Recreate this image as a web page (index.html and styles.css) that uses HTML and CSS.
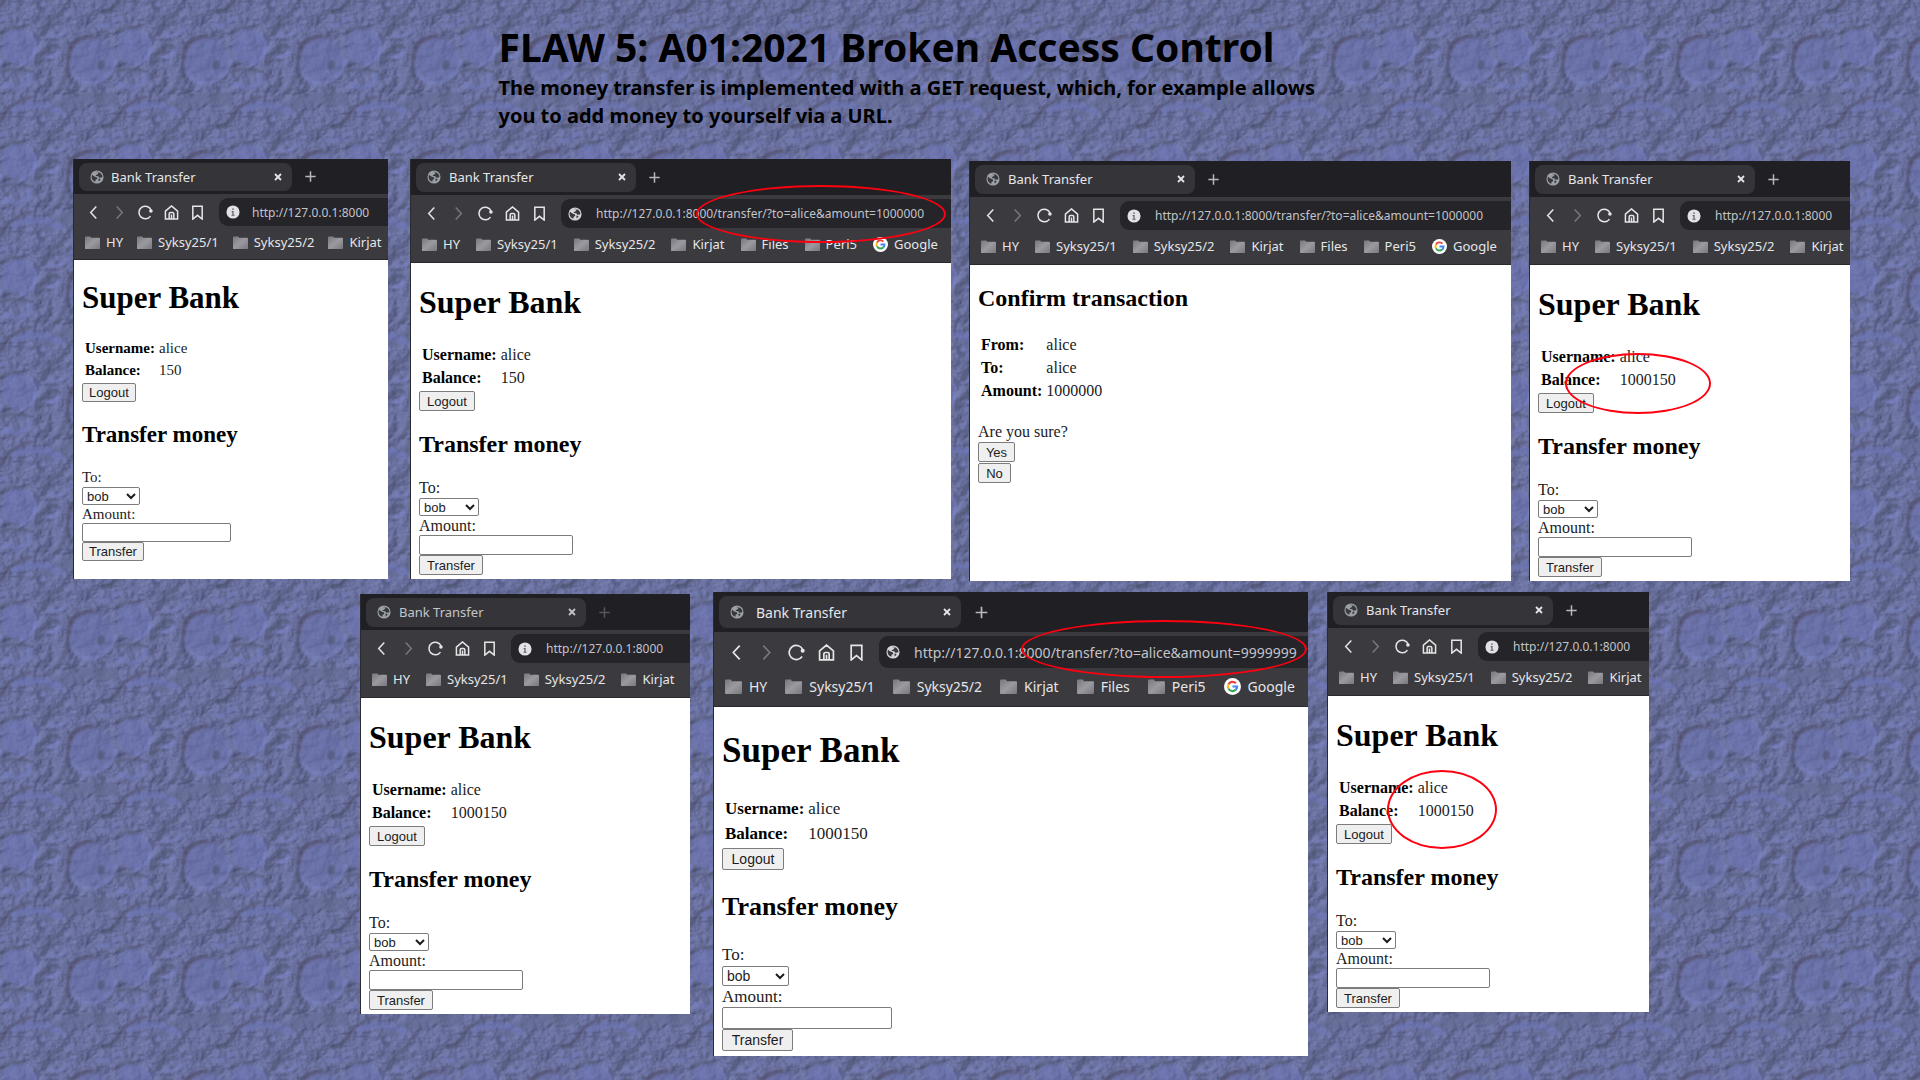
FILE: index.html
```html
<!DOCTYPE html>
<html lang="en">
<head>
<meta charset="utf-8">
<title>FLAW 5: A01:2021 Broken Access Control</title>
<link rel="stylesheet" href="styles.css">
</head>
<body>
<svg class="rock" aria-hidden="true">
  <defs>
    <filter id="soft" x="-20%" y="-20%" width="140%" height="140%" color-interpolation-filters="sRGB"><feGaussianBlur stdDeviation="1.3"/></filter>
    <filter id="grain" x="0" y="0" width="100%" height="100%" color-interpolation-filters="sRGB">
      <feTurbulence type="fractalNoise" baseFrequency="0.07 0.09" numOctaves="4" seed="8" stitchTiles="stitch"/>
      <feColorMatrix values="0 0 0 0 0  0 0 0 0 0  0 0 0 0 0  1 0 0 0 0"/>
      <feDiffuseLighting surfaceScale="4" diffuseConstant="1" lighting-color="#9198d0"><feDistantLight azimuth="25" elevation="48"/></feDiffuseLighting>
    </filter>
    <g id="crater-marks">
      <path d="M50 112Q85 92 112 100" stroke="#626a90" stroke-width="12"/>
      <ellipse cx="92" cy="59" rx="22" ry="21" fill="#6a71ae" stroke="none"/>
      <path d="M69 60Q66 40 92 36" stroke="#4b455e" stroke-width="4"/>
      <path d="M70 68Q77 86 98 82Q112 76 116 60" stroke="#7b84c8" stroke-width="4"/>
      <ellipse cx="101" cy="65" rx="4" ry="5" fill="#474d6c" stroke="none"/>
      <ellipse cx="18" cy="46" rx="16" ry="18" fill="#6c74b6" stroke="none"/>
      <path d="M34 38Q40 56 22 65" stroke="#8088d8" stroke-width="3"/>
      <path d="M2 32Q8 26 20 28" stroke="#525972" stroke-width="3"/>
      <path d="M43 33Q46 20 62 15" stroke="#4a516c" stroke-width="4"/>
      <path d="M50 35Q66 38 71 25" stroke="#7a82c8" stroke-width="3"/>
      <path d="M102 12Q110 12 118 2" stroke="#444960" stroke-width="4"/>
      <path d="M100 24Q108 29 118 18" stroke="#757dc2" stroke-width="4"/>
      <circle cx="41" cy="5" r="5" fill="#4c5276" stroke="none"/>
      <circle cx="43" cy="4" r="3" fill="#7f86c6" stroke="none"/>
      <path d="M38 64Q42 45 56 46" stroke="#49506a" stroke-width="5"/>
      <path d="M47 57Q56 59 58 51" stroke="#828ad4" stroke-width="4"/>
      <circle cx="49" cy="60" r="2" fill="#3f4560" stroke="none"/>
      <circle cx="67" cy="69" r="3" fill="#434966" stroke="none"/>
      <circle cx="77" cy="95" r="2" fill="#404662" stroke="none"/>
      <circle cx="37" cy="76" r="2" fill="#444a66" stroke="none"/>
      <path d="M0 72Q16 66 33 72" stroke="#4e556e" stroke-width="3"/>
      <path d="M4 84Q25 94 31 75" stroke="#757ec4" stroke-width="5"/>
      <path d="M2 118Q10 101 32 97" stroke="#4e4c66" stroke-width="3"/>
      <path d="M15 110Q35 99 60 112" stroke="#6d76ba" stroke-width="7"/>
      <path d="M57 92Q66 78 67 70" stroke="#4e5571" stroke-width="4"/>
    </g>
    <pattern id="tile" width="115" height="115" patternUnits="userSpaceOnUse">
      <rect width="115" height="115" fill="#68709f"/>
      <rect width="115" height="115" filter="url(#grain)" opacity="0.35"/>
      <g fill="none" stroke-linecap="round" filter="url(#soft)" opacity="0.55">
        <use href="#crater-marks"/><use href="#crater-marks" x="-115"/><use href="#crater-marks" x="115"/>
        <use href="#crater-marks" y="-115"/><use href="#crater-marks" y="115"/>
      </g>
    </pattern>
    <linearGradient id="folder-fill" x2="1" y2="1"><stop stop-color="#77777d"/><stop offset="0.5" stop-color="#9a9aa0"/><stop offset="1" stop-color="#77777d"/></linearGradient>
  </defs>
  <rect width="100%" height="100%" fill="url(#tile)"/>
</svg>
<svg class="symbols" aria-hidden="true">
  <symbol id="globe" viewBox="0 0 16 16"><circle cx="8" cy="8" r="7.5" fill="currentColor"/><path d="M2.2 5.500L5 7.500l3 1.200.3 1.500-1.800 1-.5 2.200C3.500 12.800 1.800 10.500 1.800 8zM6.500 2.300L9 2l.8 1.500L8 5.500l-1.500.3.5 1 2.500.2 1 1.800 2.800-.2 1-1.100C14.300 6 12.600 3.300 10.200 2.600zM9.500 10h1.800l.7 1L10 13z" fill="#38383d"/></symbol>
  <symbol id="info" viewBox="0 0 16 16"><circle cx="8" cy="8" r="7.500" fill="#e2e2e6"/><path d="M8 3.800v1.800M6.500 7.500H8V11.500M6.300 11.700h3.500" fill="none" stroke="#5b5b61" stroke-width="1.300"/></symbol>
  <symbol id="back" viewBox="0 0 16 16"><path d="M11 1.500L5 8l6 6.500" class="line"/></symbol>
  <symbol id="forward" viewBox="0 0 16 16"><path d="M5 1.500l6 6.500-6 6.500" class="line"/></symbol>
  <symbol id="reload" viewBox="0 0 16 16"><path d="M13.300 11.800A6.700 6.700 0 1 1 14 5.500" class="line"/><circle cx="13.800" cy="6.300" r="1.900" fill="currentColor"/></symbol>
  <symbol id="home" viewBox="0 0 16 16"><path d="M1.500 6.500L8 1l6.500 5.500V15h-13zM5.500 15V9.500a1.500 1.500 0 0 1 1.500-1.500h2a1.500 1.500 0 0 1 1.500 1.500V15M8 10v5" class="line"/></symbol>
  <symbol id="bookmark" viewBox="0 0 16 16"><path d="M3 1.200h10V15l-5-4-5 4z" class="line"/></symbol>
  <symbol id="close" viewBox="0 0 16 16"><path d="M4 4l8 8M12 4l-8 8" fill="none" stroke="currentColor" stroke-width="2.400"/></symbol>
  <symbol id="plus" viewBox="0 0 16 16"><path d="M8 2.500v11M2.500 8h11" fill="none" stroke="currentColor" stroke-width="1.600"/></symbol>
  <symbol id="folder" viewBox="0 0 16 14"><path d="M0 1.500Q0 .5 1 .5h4.500l1 1.500H15q1 0 1 1V13q0 1-1 1H1q-1 0-1-1z" fill="url(#folder-fill)"/></symbol>
  <symbol id="google" viewBox="0 0 16 16"><circle cx="8" cy="8" r="8" fill="#fff"/><g fill="none" stroke-width="2"><path d="M11.200 5A4.300 4.300 0 0 0 4.200 6" stroke="#ea4335"/><path d="M4.200 6A4.300 4.300 0 0 0 4.200 10" stroke="#fbbc05"/><path d="M4.200 10A4.300 4.300 0 0 0 10.900 11.200" stroke="#34a853"/><path d="M10.900 11.200A4.300 4.300 0 0 0 12.300 8H8" stroke="#4285f4"/></g></symbol>
</svg>

<main class="board">
  <header class="intro">
    <h1>FLAW 5: A01:2021 Broken Access Control</h1>
    <p>The money transfer is implemented with a GET request, which, for example allows you to add money to yourself via a URL.</p>
  </header>

  <div class="row row-top">
    <section class="window small first">
      <div class="tabs"><div class="tab"><svg class="favicon"><use href="#globe"/></svg><span>Bank Transfer</span><button class="icon" aria-label="Close tab"><svg><use href="#close"/></svg></button></div><button class="icon add" aria-label="New tab"><svg><use href="#plus"/></svg></button></div>
      <div class="toolbar"><button class="icon" aria-label="Back"><svg><use href="#back"/></svg></button><button class="icon off" aria-label="Forward"><svg><use href="#forward"/></svg></button><button class="icon" aria-label="Reload"><svg><use href="#reload"/></svg></button><button class="icon" aria-label="Home"><svg><use href="#home"/></svg></button><button class="icon" aria-label="Bookmark"><svg><use href="#bookmark"/></svg></button><div class="address"><svg><use href="#info"/></svg><input aria-label="Address" value="http://127.0.0.1:8000"></div></div>
      <nav class="bookmarks"><a href="#"><svg><use href="#folder"/></svg>HY</a><a href="#"><svg><use href="#folder"/></svg>Syksy25/1</a><a href="#"><svg><use href="#folder"/></svg>Syksy25/2</a><a href="#"><svg><use href="#folder"/></svg>Kirjat</a></nav>
      <div class="page">
        <h2 class="bank">Super Bank</h2>
        <table><tr><th scope="row">Username:</th><td>alice</td></tr><tr><th scope="row">Balance:</th><td>150</td></tr></table>
        <button class="push logout">Logout</button>
        <h3>Transfer money</h3>
        <form><label for="to1">To:</label><select id="to1"><option>bob</option></select><label for="sum1">Amount:</label><input id="sum1" type="text"><button class="push send" type="button">Transfer</button></form>
      </div>
    </section>

    <section class="window medium">
      <div class="tabs"><div class="tab"><svg class="favicon"><use href="#globe"/></svg><span>Bank Transfer</span><button class="icon" aria-label="Close tab"><svg><use href="#close"/></svg></button></div><button class="icon add" aria-label="New tab"><svg><use href="#plus"/></svg></button></div>
      <div class="toolbar"><button class="icon" aria-label="Back"><svg><use href="#back"/></svg></button><button class="icon off" aria-label="Forward"><svg><use href="#forward"/></svg></button><button class="icon" aria-label="Reload"><svg><use href="#reload"/></svg></button><button class="icon" aria-label="Home"><svg><use href="#home"/></svg></button><button class="icon" aria-label="Bookmark"><svg><use href="#bookmark"/></svg></button><div class="address"><svg><use href="#globe"/></svg><input aria-label="Address" value="http://127.0.0.1:8000/transfer/?to=alice&amp;amount=1000000"></div></div>
      <nav class="bookmarks"><a href="#"><svg><use href="#folder"/></svg>HY</a><a href="#"><svg><use href="#folder"/></svg>Syksy25/1</a><a href="#"><svg><use href="#folder"/></svg>Syksy25/2</a><a href="#"><svg><use href="#folder"/></svg>Kirjat</a><a href="#"><svg><use href="#folder"/></svg>Files</a><a href="#"><svg><use href="#folder"/></svg>Peri5</a><a href="#"><svg><use href="#google"/></svg>Google</a></nav>
      <div class="page">
        <h2 class="bank">Super Bank</h2>
        <table><tr><th scope="row">Username:</th><td>alice</td></tr><tr><th scope="row">Balance:</th><td>150</td></tr></table>
        <button class="push logout">Logout</button>
        <h3>Transfer money</h3>
        <form><label for="to2">To:</label><select id="to2"><option>bob</option></select><label for="sum2">Amount:</label><input id="sum2" type="text"><button class="push send" type="button">Transfer</button></form>
      </div>
      <span class="ring ring-url"></span>
    </section>

    <section class="window medium lowered">
      <div class="tabs"><div class="tab"><svg class="favicon"><use href="#globe"/></svg><span>Bank Transfer</span><button class="icon" aria-label="Close tab"><svg><use href="#close"/></svg></button></div><button class="icon add" aria-label="New tab"><svg><use href="#plus"/></svg></button></div>
      <div class="toolbar"><button class="icon" aria-label="Back"><svg><use href="#back"/></svg></button><button class="icon off" aria-label="Forward"><svg><use href="#forward"/></svg></button><button class="icon" aria-label="Reload"><svg><use href="#reload"/></svg></button><button class="icon" aria-label="Home"><svg><use href="#home"/></svg></button><button class="icon" aria-label="Bookmark"><svg><use href="#bookmark"/></svg></button><div class="address"><svg><use href="#info"/></svg><input aria-label="Address" value="http://127.0.0.1:8000/transfer/?to=alice&amp;amount=1000000"></div></div>
      <nav class="bookmarks"><a href="#"><svg><use href="#folder"/></svg>HY</a><a href="#"><svg><use href="#folder"/></svg>Syksy25/1</a><a href="#"><svg><use href="#folder"/></svg>Syksy25/2</a><a href="#"><svg><use href="#folder"/></svg>Kirjat</a><a href="#"><svg><use href="#folder"/></svg>Files</a><a href="#"><svg><use href="#folder"/></svg>Peri5</a><a href="#"><svg><use href="#google"/></svg>Google</a></nav>
      <div class="page">
        <h3>Confirm transaction</h3>
        <table><tr><th scope="row">From:</th><td>alice</td></tr><tr><th scope="row">To:</th><td>alice</td></tr><tr><th scope="row">Amount:</th><td>1000000</td></tr></table>
        <p class="question">Are you sure?</p>
        <button class="push yes">Yes</button>
        <button class="push no">No</button>
      </div>
    </section>

    <section class="window medium lowered">
      <div class="tabs"><div class="tab"><svg class="favicon"><use href="#globe"/></svg><span>Bank Transfer</span><button class="icon" aria-label="Close tab"><svg><use href="#close"/></svg></button></div><button class="icon add" aria-label="New tab"><svg><use href="#plus"/></svg></button></div>
      <div class="toolbar"><button class="icon" aria-label="Back"><svg><use href="#back"/></svg></button><button class="icon off" aria-label="Forward"><svg><use href="#forward"/></svg></button><button class="icon" aria-label="Reload"><svg><use href="#reload"/></svg></button><button class="icon" aria-label="Home"><svg><use href="#home"/></svg></button><button class="icon" aria-label="Bookmark"><svg><use href="#bookmark"/></svg></button><div class="address"><svg><use href="#info"/></svg><input aria-label="Address" value="http://127.0.0.1:8000"></div></div>
      <nav class="bookmarks"><a href="#"><svg><use href="#folder"/></svg>HY</a><a href="#"><svg><use href="#folder"/></svg>Syksy25/1</a><a href="#"><svg><use href="#folder"/></svg>Syksy25/2</a><a href="#"><svg><use href="#folder"/></svg>Kirjat</a></nav>
      <div class="page">
        <h2 class="bank">Super Bank</h2>
        <table><tr><th scope="row">Username:</th><td>alice</td></tr><tr><th scope="row">Balance:</th><td>1000150</td></tr></table>
        <button class="push logout">Logout</button>
        <h3>Transfer money</h3>
        <form><label for="to4">To:</label><select id="to4"><option>bob</option></select><label for="sum4">Amount:</label><input id="sum4" type="text"><button class="push send" type="button">Transfer</button></form>
      </div>
      <span class="ring ring-balance"></span>
    </section>
  </div>

  <div class="row row-bottom">
    <section class="window medium first lowered inactive">
      <div class="tabs"><div class="tab"><svg class="favicon"><use href="#globe"/></svg><span>Bank Transfer</span><button class="icon" aria-label="Close tab"><svg><use href="#close"/></svg></button></div><button class="icon add" aria-label="New tab"><svg><use href="#plus"/></svg></button></div>
      <div class="toolbar"><button class="icon" aria-label="Back"><svg><use href="#back"/></svg></button><button class="icon off" aria-label="Forward"><svg><use href="#forward"/></svg></button><button class="icon" aria-label="Reload"><svg><use href="#reload"/></svg></button><button class="icon" aria-label="Home"><svg><use href="#home"/></svg></button><button class="icon" aria-label="Bookmark"><svg><use href="#bookmark"/></svg></button><div class="address"><svg><use href="#info"/></svg><input aria-label="Address" value="http://127.0.0.1:8000"></div></div>
      <nav class="bookmarks"><a href="#"><svg><use href="#folder"/></svg>HY</a><a href="#"><svg><use href="#folder"/></svg>Syksy25/1</a><a href="#"><svg><use href="#folder"/></svg>Syksy25/2</a><a href="#"><svg><use href="#folder"/></svg>Kirjat</a></nav>
      <div class="page">
        <h2 class="bank">Super Bank</h2>
        <table><tr><th scope="row">Username:</th><td>alice</td></tr><tr><th scope="row">Balance:</th><td>1000150</td></tr></table>
        <button class="push logout">Logout</button>
        <h3>Transfer money</h3>
        <form><label for="to5">To:</label><select id="to5"><option>bob</option></select><label for="sum5">Amount:</label><input id="sum5" type="text"><button class="push send" type="button">Transfer</button></form>
      </div>
    </section>

    <section class="window large">
      <div class="tabs"><div class="tab"><svg class="favicon"><use href="#globe"/></svg><span>Bank Transfer</span><button class="icon" aria-label="Close tab"><svg><use href="#close"/></svg></button></div><button class="icon add" aria-label="New tab"><svg><use href="#plus"/></svg></button></div>
      <div class="toolbar"><button class="icon" aria-label="Back"><svg><use href="#back"/></svg></button><button class="icon off" aria-label="Forward"><svg><use href="#forward"/></svg></button><button class="icon" aria-label="Reload"><svg><use href="#reload"/></svg></button><button class="icon" aria-label="Home"><svg><use href="#home"/></svg></button><button class="icon" aria-label="Bookmark"><svg><use href="#bookmark"/></svg></button><div class="address"><svg><use href="#globe"/></svg><input aria-label="Address" value="http://127.0.0.1:8000/transfer/?to=alice&amp;amount=9999999"></div></div>
      <nav class="bookmarks"><a href="#"><svg><use href="#folder"/></svg>HY</a><a href="#"><svg><use href="#folder"/></svg>Syksy25/1</a><a href="#"><svg><use href="#folder"/></svg>Syksy25/2</a><a href="#"><svg><use href="#folder"/></svg>Kirjat</a><a href="#"><svg><use href="#folder"/></svg>Files</a><a href="#"><svg><use href="#folder"/></svg>Peri5</a><a href="#"><svg><use href="#google"/></svg>Google</a></nav>
      <div class="page">
        <h2 class="bank">Super Bank</h2>
        <table><tr><th scope="row">Username:</th><td>alice</td></tr><tr><th scope="row">Balance:</th><td>1000150</td></tr></table>
        <button class="push logout">Logout</button>
        <h3>Transfer money</h3>
        <form><label for="to6">To:</label><select id="to6"><option>bob</option></select><label for="sum6">Amount:</label><input id="sum6" type="text"><button class="push send" type="button">Transfer</button></form>
      </div>
      <span class="ring ring-url-large"></span>
    </section>

    <section class="window medium">
      <div class="tabs"><div class="tab"><svg class="favicon"><use href="#globe"/></svg><span>Bank Transfer</span><button class="icon" aria-label="Close tab"><svg><use href="#close"/></svg></button></div><button class="icon add" aria-label="New tab"><svg><use href="#plus"/></svg></button></div>
      <div class="toolbar"><button class="icon" aria-label="Back"><svg><use href="#back"/></svg></button><button class="icon off" aria-label="Forward"><svg><use href="#forward"/></svg></button><button class="icon" aria-label="Reload"><svg><use href="#reload"/></svg></button><button class="icon" aria-label="Home"><svg><use href="#home"/></svg></button><button class="icon" aria-label="Bookmark"><svg><use href="#bookmark"/></svg></button><div class="address"><svg><use href="#info"/></svg><input aria-label="Address" value="http://127.0.0.1:8000"></div></div>
      <nav class="bookmarks"><a href="#"><svg><use href="#folder"/></svg>HY</a><a href="#"><svg><use href="#folder"/></svg>Syksy25/1</a><a href="#"><svg><use href="#folder"/></svg>Syksy25/2</a><a href="#"><svg><use href="#folder"/></svg>Kirjat</a></nav>
      <div class="page">
        <h2 class="bank">Super Bank</h2>
        <table><tr><th scope="row">Username:</th><td>alice</td></tr><tr><th scope="row">Balance:</th><td>1000150</td></tr></table>
        <button class="push logout">Logout</button>
        <h3>Transfer money</h3>
        <form><label for="to7">To:</label><select id="to7"><option>bob</option></select><label for="sum7">Amount:</label><input id="sum7" type="text"><button class="push send" type="button">Transfer</button></form>
      </div>
      <span class="ring ring-round"></span>
    </section>
  </div>
</main>
</body>
</html>
```
FILE: styles.css
```css
* { box-sizing: border-box; }

body {
  margin: 0;
  background: #666e9f;
}

.rock {
  position: absolute;
  inset: 0;
  z-index: -1;
  width: 100%;
  height: 100%;
}

.symbols { display: none; }
.line { fill: none; stroke: currentColor; stroke-width: 1.6; }

.board {
  display: flex;
  flex-direction: column;
  padding: 19px 70px 20px 73px;
  min-height: 100vh;
}

.intro {
  width: 100%;
  max-width: 926px;
  margin: 0 auto;
  padding-bottom: 29px;
  color: #000;
  font-family: "Noto Sans", sans-serif;
  font-weight: 700;
}
.intro h1 { margin: 0; font-size: 39px; line-height: 55px; font-weight: 700; }
.intro p { margin: 0; max-width: 832px; font-size: 20px; line-height: 28px; }

.row {
  display: grid;
  align-items: start;
}
.row-top {
  grid-template-columns: 319fr 541fr 542fr 321fr;
  gap: 18px;
}
.row-bottom {
  grid-template-columns: 334fr 595fr 322fr;
  gap: 19px;
  width: calc(100% - 488px);
  padding-top: 11px;
  margin-left: 287px;
}

.window {
  position: relative;
  min-height: var(--window);
  overflow: hidden;
  background: #fff;
  border-left: 1px solid #2a2a2f;
  color: #000;
  font-family: "Liberation Serif", serif;
  font-size: var(--text);
  line-height: var(--line);
}
.first { margin-right: 4px; }
.lowered { margin-top: 2px; }

.small {
  --window: 420px; --text: 15px; --line: 18px; --ui: 13px; --url: 12px; --control: 13px;
  --strip: 35px; --tab: 213px; --tab-height: 28px; --tab-gap: 7px; --icon: 15px; --step: 26px; --edge: 6px; --bar-gap: 9px;
  --bar: 28px; --url-gap: 12px; --marks: 33px; --mark-gap: 14px; --mark-icon: 6px;
  --h2: 31px; --h2-line: 36px; --h2-gap: 20px; --h3: 23px; --h3-line: 26px; --h3-gap: 20px;
  --field: 19px; --select: 18px; --logout: 54px; --send: 62px; --input: 149px; --choice: 58px;
}
.medium {
  --window: 420px; --text: 16px; --line: 19px; --ui: 13px; --url: 12px; --control: 13px;
  --strip: 36px; --tab: 220px; --tab-height: 29px; --tab-gap: 8px; --icon: 15px; --step: 27px; --edge: 7px; --bar-gap: 8px;
  --bar: 29px; --url-gap: 14px; --marks: 34px; --mark-gap: 16px; --mark-icon: 6px;
  --h2: 32px; --h2-line: 37px; --h2-gap: 21px; --h3: 24px; --h3-line: 27px; --h3-gap: 20px;
  --field: 20px; --select: 18px; --logout: 56px; --send: 64px; --input: 154px; --choice: 60px;
}
.large {
  --window: 464px; --text: 17px; --line: 21px; --ui: 14px; --url: 14px; --control: 14px;
  --strip: 40px; --tab: 242px; --tab-height: 32px; --tab-gap: 12px; --icon: 17px; --step: 30px; --edge: 7px; --bar-gap: 8px;
  --bar: 32px; --url-gap: 14px; --marks: 38px; --mark-gap: 18px; --mark-icon: 7px;
  --h2: 35px; --h2-line: 40px; --h2-gap: 24px; --h3: 26px; --h3-line: 30px; --h3-gap: 22px;
  --field: 22px; --select: 20px; --logout: 62px; --send: 71px; --input: 170px; --choice: 67px;
}

.tabs, .toolbar, .bookmarks {
  display: flex;
  align-items: center;
  font-family: "Noto Sans", sans-serif;
  font-size: var(--ui);
  color: #e6e6e8;
}
.tabs { height: var(--strip); padding-left: 5px; background: #1f1f24; }
.tab {
  display: flex;
  flex: none;
  align-items: center;
  gap: var(--tab-gap);
  width: var(--tab);
  height: var(--tab-height);
  padding: 0 4px 0 11px;
  border-radius: 8px;
  background: #343439;
}
.tab span { flex: 1; white-space: nowrap; }
.favicon { width: 14px; height: 14px; color: #9aa0a6; }

.icon {
  display: flex;
  flex: none;
  justify-content: center;
  width: var(--step);
  padding: 0;
  border: 0;
  background: none;
  color: inherit;
}
.icon svg { width: var(--icon); height: var(--icon); }
.tab .icon { width: 20px; }
.tab .icon svg { width: 12px; height: 12px; }
.add { margin-left: 5px; color: #b8b8bc; }
.off { color: #77777c; }
.inactive .tab { color: #c4c4c8; }
.inactive .add { color: #56565b; }

.toolbar { padding: 4px 0 1px var(--edge); background: #3b3b3f; }
.address {
  display: flex;
  flex: 1;
  align-items: center;
  gap: var(--url-gap);
  min-width: 0;
  height: var(--bar);
  margin-left: var(--bar-gap);
  padding-left: 7px;
  border-radius: 9px 0 0 9px;
  background: #242429;
  color: #d4d4d8;
}
.address svg { flex: none; width: 14px; height: 14px; }
.address input {
  flex: 1;
  min-width: 0;
  padding: 0;
  border: 0;
  outline: 0;
  background: none;
  color: #c3c3c9;
  font-family: inherit;
  font-size: var(--url);
}

.bookmarks {
  gap: var(--mark-gap);
  height: var(--marks);
  padding: 0 0 2px 11px;
  border-bottom: 1px solid #29292e;
  background: #3b3b3f;
}
.bookmarks a {
  display: flex;
  flex: none;
  align-items: center;
  gap: var(--mark-icon);
  color: inherit;
  text-decoration: none;
}
.bookmarks svg { width: var(--icon); height: var(--icon); }

.page { padding: 0 8px; }
.page h2, .page h3 { font-weight: 700; }
.page h2 { margin: var(--h2-gap) 0; font-size: var(--h2); line-height: var(--h2-line); }
.page h3 { margin: var(--h3-gap) 0; font-size: var(--h3); line-height: var(--h3-line); }
.page table { border-spacing: 2px; margin-bottom: 1px; }
.page th, .page td { padding: 1px; text-align: left; }
.page td { color: #222; }
.page form { display: flex; flex-direction: column; align-items: flex-start; color: #222; }
.question { margin: var(--line) 0 1px; color: #222; }

.push, .page select, .page input {
  border: 1px solid #7c7c7c;
  border-radius: 2px;
  font-family: "Liberation Sans", sans-serif;
  font-size: var(--control);
  color: #1c1c1c;
}
.push { display: block; height: var(--field); padding: 0; background: #efefef; line-height: 1; }
.page select { width: var(--choice); height: var(--select); margin-top: 1px; background: #fff; }
.page input { width: var(--input); height: var(--field); background: #fff; }
.logout { width: var(--logout); }
.send { width: var(--send); }
.yes { width: 37px; }
.no { width: 33px; margin-top: 1px; }

/* red marker ellipses drawn over the windows */
.ring {
  position: absolute;
  border: 2px solid #ff0010;
  border-radius: 50%;
  pointer-events: none;
}
.ring-url { left: 285px; top: 26px; width: 250px; height: 58px; }
.ring-balance { left: 35px; top: 192px; width: 146px; height: 61px; }
.ring-url-large { left: 307px; top: 28px; width: 286px; height: 58px; }
.ring-round { left: 59px; top: 178px; width: 110px; height: 79px; }
```
